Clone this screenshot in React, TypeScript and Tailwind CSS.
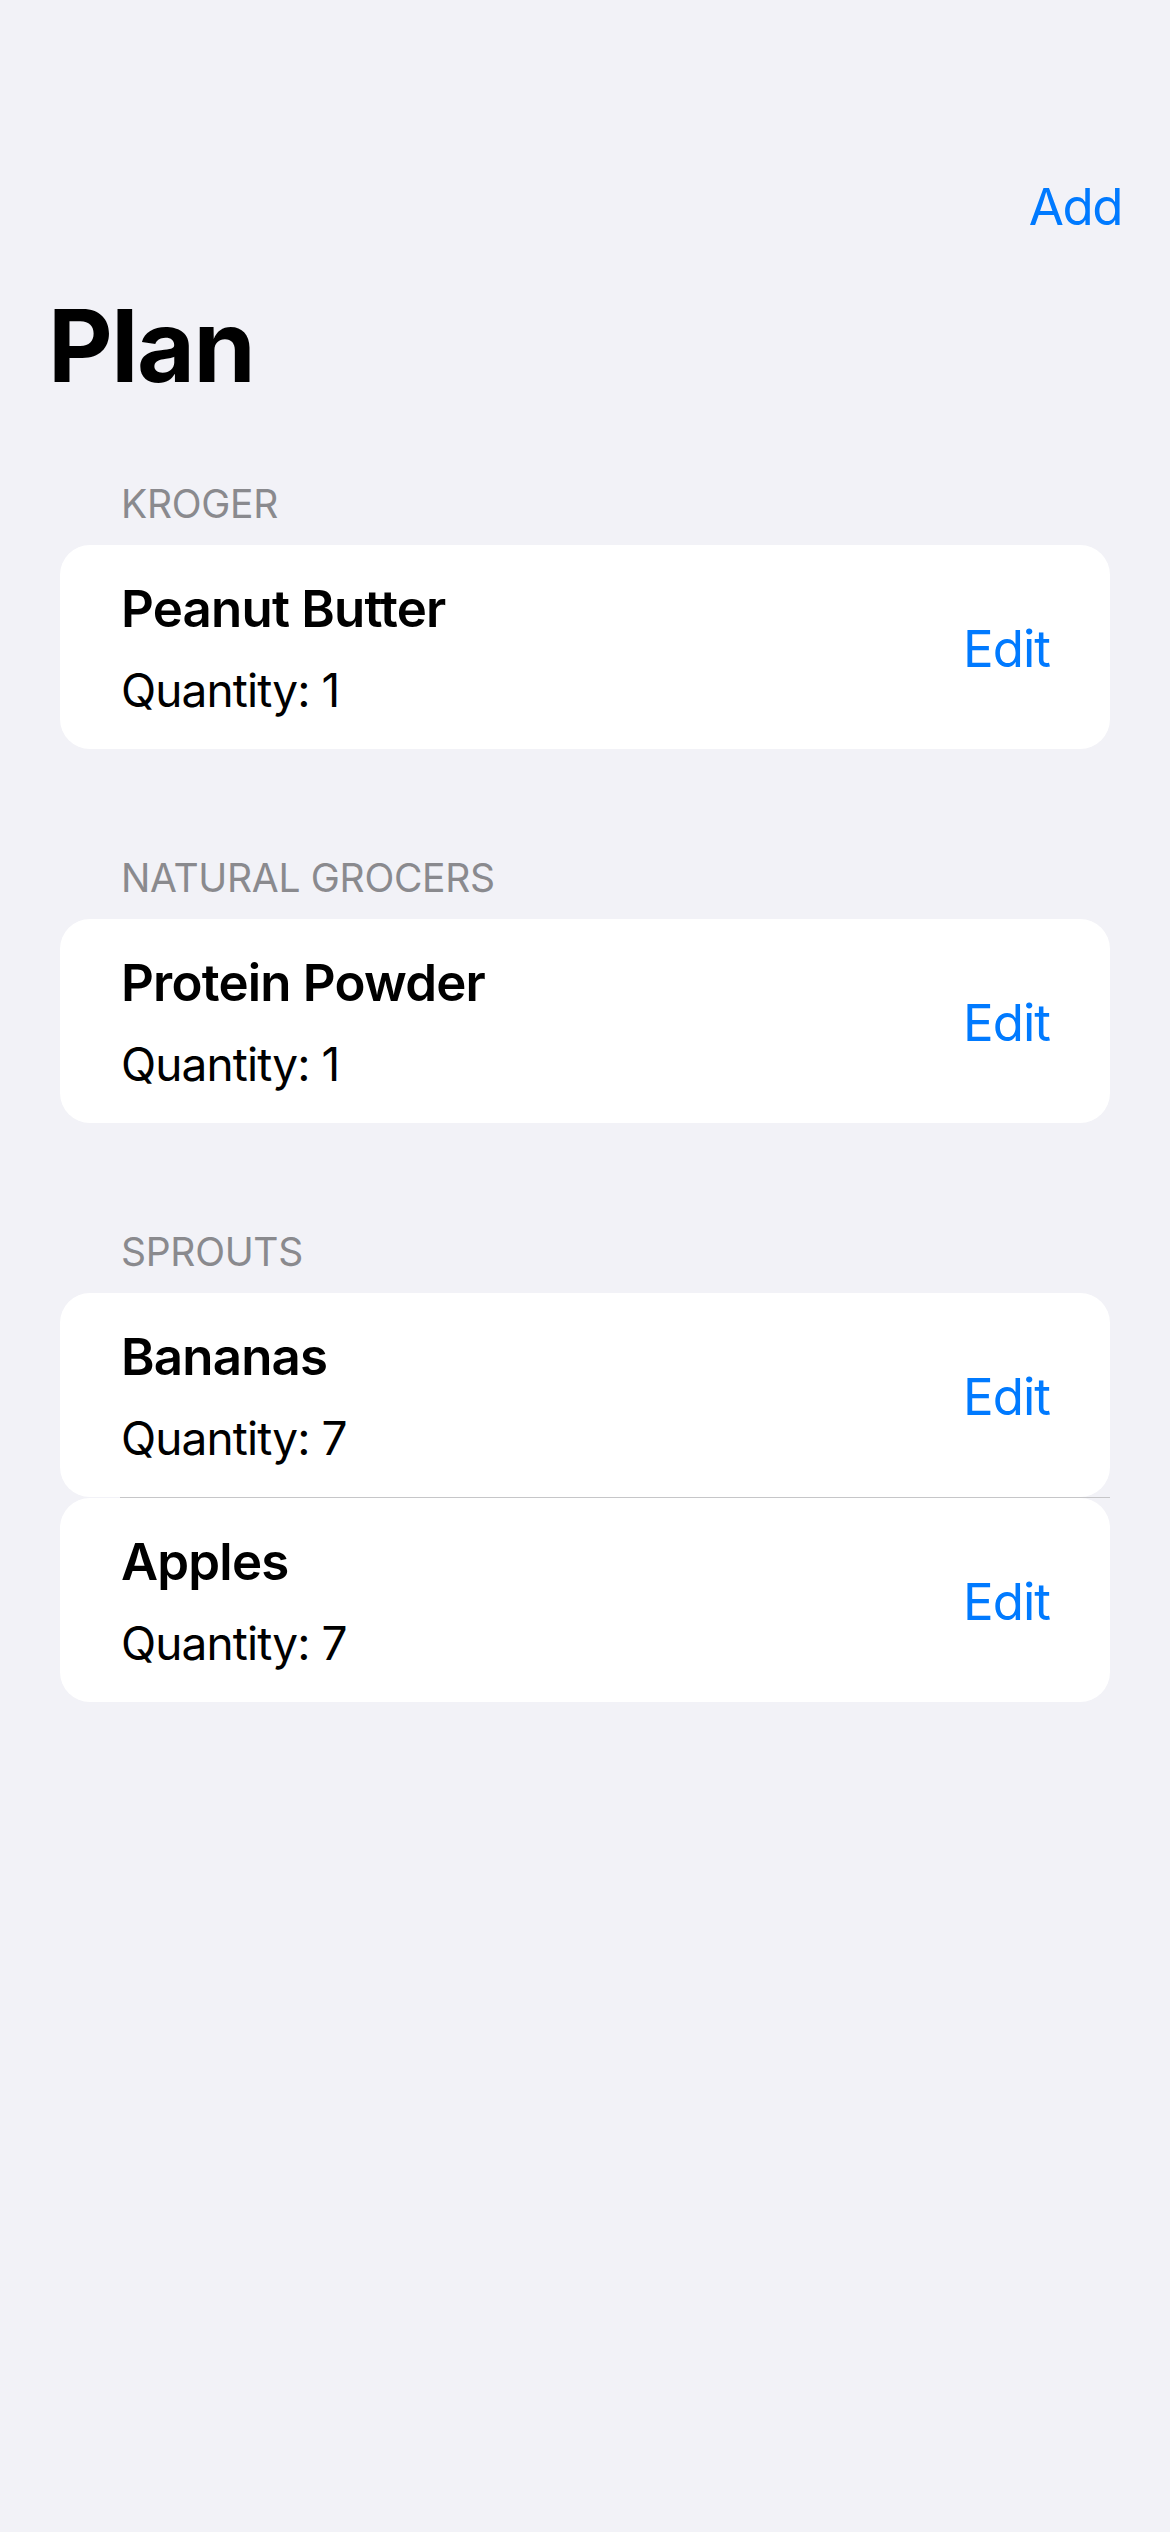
import React from 'react'

// Datos de la lista de compras agrupados por tienda
const sections = [
  { store: 'Kroger', items: [{ name: 'Peanut Butter', qty: 1 }] },
  { store: 'Natural Grocers', items: [{ name: 'Protein Powder', qty: 1 }] },
  {
    store: 'Sprouts',
    items: [
      { name: 'Bananas', qty: 7 },
      { name: 'Apples', qty: 7 },
    ],
  },
]

function ItemRow({ name, qty }: { name: string; qty: number }) {
  return (
    <div className="flex items-center justify-between rounded-[30px] bg-white pl-[61px] pr-[60px] pt-[33px] pb-[30px]">
      <div className="flex flex-col gap-[22px]">
        <span className="text-[51px] leading-[61px] font-semibold text-black tracking-[-0.8px]">{name}</span>
        <span className="text-[46px] leading-[58px] text-black tracking-[-0.9px]">Quantity: {qty}</span>
      </div>
      <button className="text-[51px] leading-[61px] text-[#007aff] tracking-[-1px]">Edit</button>
    </div>
  )
}

export default function App() {
  return (
    <div
      className="min-h-[2532px] w-full bg-[#f2f2f7] pt-[176px]"
      style={{ fontFamily: 'Inter, "Noto Sans", sans-serif' }}
    >
      {/* Barra de navegación */}
      <div className="flex justify-end pr-[48px]">
        <button className="text-[51px] leading-[61px] text-[#007aff] tracking-[-1.5px]">Add</button>
      </div>
      <h1 className="mt-[48px] pl-[48px] text-[100px] leading-[121px] font-bold text-black tracking-[-1.5px]">
        Plan
      </h1>

      {/* Secciones */}
      <div className="mt-[74px] flex flex-col gap-[105px] px-[60px]">
        {sections.map((section) => (
          <div key={section.store}>
            <h2 className="mb-[18px] pl-[61px] text-[39px] leading-[47px] uppercase text-[#8a8a8e] tracking-[-0.3px]">
              {section.store}
            </h2>
            <div className="flex flex-col">
              {section.items.map((item, i) => (
                <React.Fragment key={item.name}>
                  {i > 0 && <div className="ml-[60px] h-px bg-[#c6c6c8]" />}
                  <ItemRow name={item.name} qty={item.qty} />
                </React.Fragment>
              ))}
            </div>
          </div>
        ))}
      </div>
    </div>
  )
}
